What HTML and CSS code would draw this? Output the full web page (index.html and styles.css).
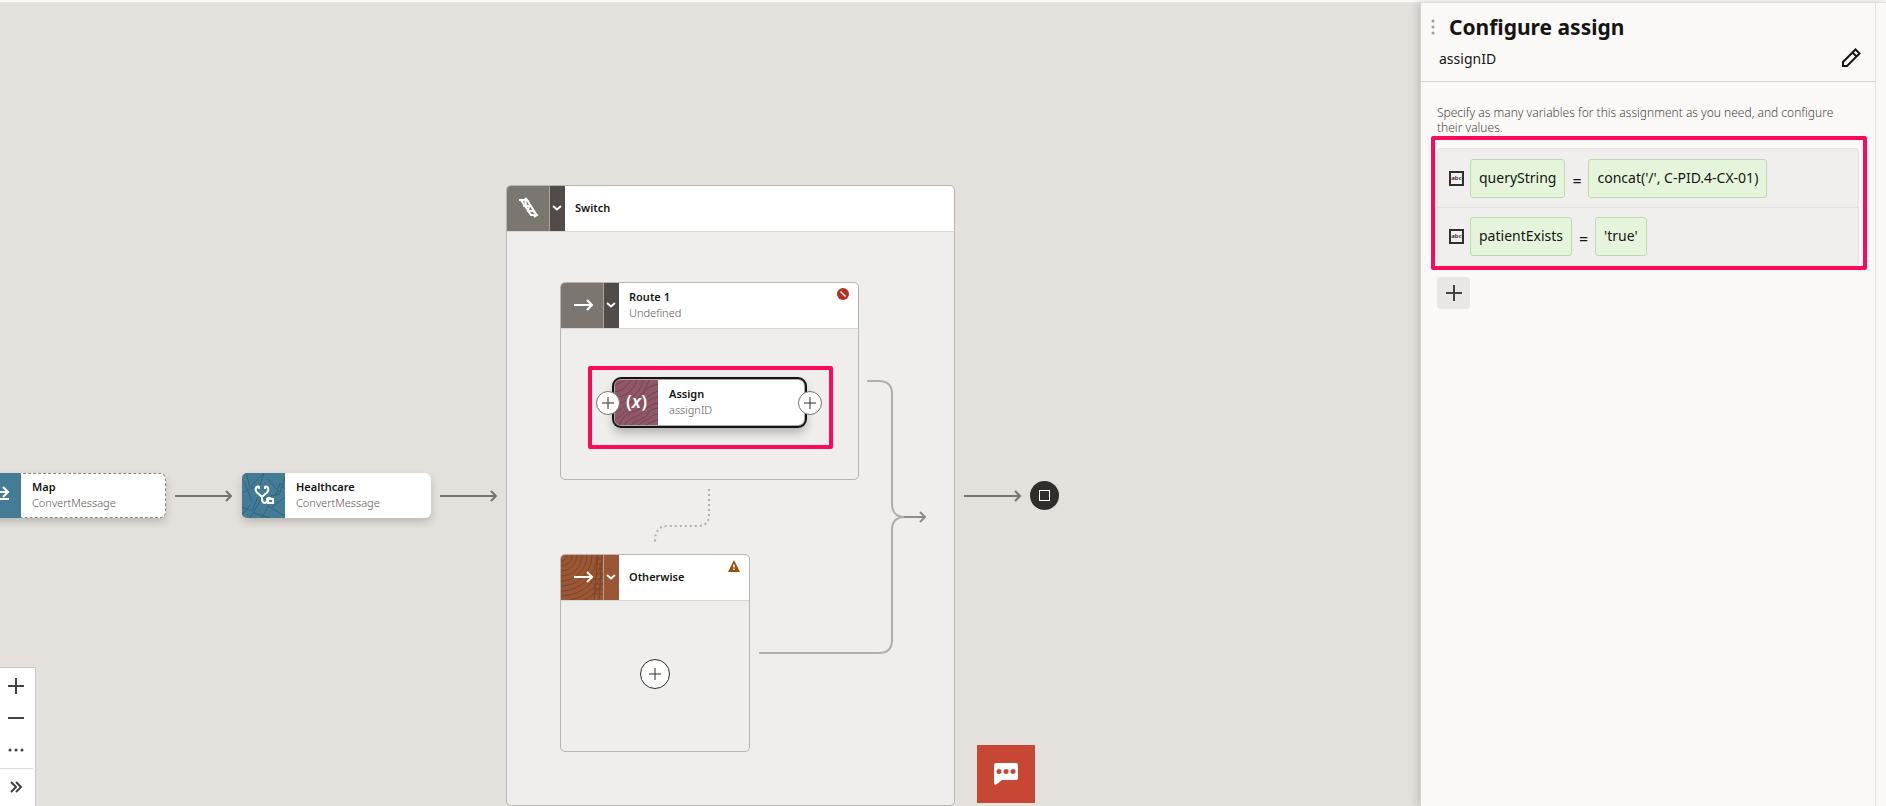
FILE: index.html
```html
<!DOCTYPE html>
<html lang="en">
<head>
<meta charset="utf-8">
<title>Configure assign</title>
<link rel="stylesheet" href="styles.css">
</head>
<body>
<div class="app">
  <main class="canvas">
    <svg class="wires" aria-hidden="true">
      <g class="wire-dark">
        <path d="M175 493h56M226 488l5 5-5 5"/>
        <path d="M440 493h56M491 488l5 5-5 5"/>
        <path d="M964 493h56M1015 488l5 5-5 5"/>
      </g>
    </svg>

    <section class="node map">
      <div class="tile teal"><svg viewBox="0 0 43 45"><path class="ico" d="M12 19h19M25 14l5 5-5 5M13 26h18"/></svg></div>
      <div class="label"><b>Map</b><span>ConvertMessage</span></div>
    </section>

    <section class="node health">
      <div class="tile teal"><svg viewBox="0 0 43 45">
        <path class="grain" d="M4 0l4 14 14-14M0 20l12-6M8 45l12-20 18-4M22 0l-4 12M26 6l12 14 5-16M0 34l10 4 6-14M20 45l6-12 17 10M30 34l13-10M2 8l8 20M34 22l4-12 5 6M12 40l16 5M0 42l8-10"/>
        <path class="ico" d="M17 13.500c-4-.500-4 4-2 6l5 4.500 5-4.500c2-2 2-6.500-2-6M17 13v3M23 13v3M20 24v2c0 5 5 5 5 1 0-3 4-3 4 0"/>
        <rect class="ico" x="26" y="26" width="5" height="4"/></svg></div>
      <div class="label"><b>Healthcare</b><span>ConvertMessage</span></div>
    </section>

    <section class="group switch">
      <header>
        <div class="tile gray"><svg viewBox="0 0 43 45"><path class="ico" d="M12 14h8l-2-2M14 14l10 15h5M20 14l9 14M26 25l4 4-3 2M18 13l1 6-3 1M17 20h5l-1 5h5l2 2"/></svg></div>
        <button class="toggle dark" aria-label="Collapse Switch"><svg viewBox="0 0 14 45"><path class="ico" d="M3 20l4 3.500 4-3.500"/></svg></button>
        <div class="label"><b>Switch</b></div>
      </header>
    </section>

    <section class="group route">
      <header>
        <div class="tile gray"><svg viewBox="0 0 43 45"><path class="ico" d="M13 22h17M26 17l5 5-5 5"/></svg></div>
        <button class="toggle dark" aria-label="Collapse Route 1"><svg viewBox="0 0 14 45"><path class="ico" d="M3 20l4 3.500 4-3.500"/></svg></button>
        <div class="label"><b>Route 1</b><span>Undefined</span></div>
        <svg class="status" viewBox="0 0 12 12"><circle cx="6" cy="6" r="6" fill="#b3311f"/><path d="M3.500 3.500l5 5" stroke="#fff" stroke-width="1.500"/></svg>
      </header>
    </section>

    <section class="group otherwise">
      <header>
        <div class="tile rust"><svg viewBox="0 0 43 45">
          <g class="grain"><circle r="6"/><circle r="11"/><circle r="16"/><circle r="21"/><circle r="26"/><circle r="31"/><circle r="36"/><circle r="41"/><circle r="46"/><circle r="51"/></g>
          <path class="grain" d="M37 0l-4 45M41 0l-3 45M34 4h9M34 9h9M34 14h9M33 19h10M33 24h10M32 29h11M32 34h11M31 39h12"/>
          <path class="ico" d="M13 22h17M26 17l5 5-5 5"/></svg></div>
        <button class="toggle rust" aria-label="Collapse Otherwise"><svg viewBox="0 0 14 45"><path class="ico" d="M3 20l4 3.500 4-3.500"/></svg></button>
        <div class="label"><b>Otherwise</b></div>
        <svg class="status" viewBox="0 0 12 12"><path d="M6 0l6 12H0z" fill="#95520f"/><path d="M6 4.500v3M6 8.500v1.500" stroke="#fff" stroke-width="1.500"/></svg>
      </header>
      <div class="body"><button class="add large" aria-label="Add action"><svg viewBox="0 0 12 12"><path d="M6 0v12M0 6h12"/></svg></button></div>
    </section>

    <svg class="wires" aria-hidden="true">
      <path class="wire-light" d="M867 378h12q13 0 13 13v110q0 13 13 13M759 650h120q13 0 13-13V527q0-13 13-13"/>
      <path class="wire-mid" d="M904 514h21M920 509l5 5-5 5"/>
      <path class="wire-dots" d="M709 486v26q0 11-11 11h-31q-12 0-12 16"/>
    </svg>

    <div class="callout assign-mark"></div>
    <section class="node assign">
      <div class="tile plum"><svg viewBox="0 0 43 45">
        <path class="grain" d="M0 6c5-4 8-4 10-6M0 12C10 10 12 5 16 0M0 18c10-2 18-6 22-18M0 25c8-2 12-6 16-8 6-3 10-8 12-17M0 32c10-3 8-8 16-10 8-3 14-10 18-22M0 39c8-3 10-10 18-12 8-3 14-12 25-16M4 45c4-8 8-12 16-14s10-12 23-14M10 45c2-6 10-8 14-10 6-3 8-10 19-12M16 45c6-6 14-6 16-10 2-5 6-6 11-7M24 45c4-5 8-4 12-8 2-2 4-3 7-3M32 45c3-3 7-4 11-5M28 14c2-6 8-8 15-10"/></svg>
        <strong>(<i>x</i>)</strong></div>
      <div class="label"><b>Assign</b><span>assignID</span></div>
      <button class="add before" aria-label="Add before"><svg viewBox="0 0 12 12"><path d="M6 0v12M0 6h12"/></svg></button>
      <button class="add after" aria-label="Add after"><svg viewBox="0 0 12 12"><path d="M6 0v12M0 6h12"/></svg></button>
    </section>

    <div class="end"></div>

    <nav class="zoombar">
      <button aria-label="Zoom in"><svg viewBox="0 0 16 16"><path d="M8 0v16M0 8h16"/></svg></button>
      <button aria-label="Zoom out"><svg viewBox="0 0 16 16"><path d="M0 8h16"/></svg></button>
      <button aria-label="More"><svg viewBox="0 0 16 16"><path class="dots" d="M2 8h.01M8 8h.01M14 8h.01"/></svg></button>
      <hr>
      <button aria-label="Expand"><svg viewBox="0 0 16 16"><path d="M3 3l5 5-5 5M8 3l5 5-5 5"/></svg></button>
    </nav>

    <button class="chat" aria-label="Chat"><svg viewBox="0 0 24 22"><path d="M2 0h20q2 0 2 2v13q0 2-2 2H8l-5 4q-3 2-3-1V2q0-2 2-2z" fill="#fff"/><g fill="#c74634"><circle cx="5" cy="8.500" r="2.500"/><circle cx="12" cy="8.500" r="2.500"/><circle cx="19" cy="8.500" r="2.500"/></g></svg></button>
  </main>

  <aside class="panel">
    <header class="panel-head">
      <div class="title"><svg viewBox="0 0 4 16"><g fill="#a19d99"><circle cx="2" cy="2" r="1.500"/><circle cx="2" cy="8" r="1.500"/><circle cx="2" cy="14" r="1.500"/></g></svg><h1>Configure assign</h1></div>
      <div class="name"><span>assignID</span>
        <button aria-label="Edit"><svg viewBox="0 0 20 20"><path d="M2 18v-4L14.500 1.500l4 4L6 18zM11.500 4.500l4 4"/></svg></button></div>
    </header>
    <div class="panel-body">
      <p>Specify as many variables for this assignment as you need, and configure their values.</p>
      <div class="callout list-mark">
        <ul>
          <li><em>abc</em><span class="chip">queryString</span><span class="eq">=</span><span class="chip">concat('/', C-PID.4-CX-01)</span></li>
          <li><em>abc</em><span class="chip">patientExists</span><span class="eq">=</span><span class="chip">'true'</span></li>
        </ul>
      </div>
      <button class="plus" aria-label="Add variable"><svg viewBox="0 0 16 16"><path d="M8 0v16M0 8h16"/></svg></button>
    </div>
  </aside>
</div>
</body>
</html>
```
FILE: styles.css
```css
* { box-sizing: border-box; }
body {
  margin: 0;
  background: #fbf9f8;
  color: #161513;
  font-family: "Noto Sans", "Open Sans", sans-serif;
  font-size: 12px;
  overflow: hidden;
}
button { padding: 0; border: 0; background: none; color: inherit; font: inherit; }
svg { display: block; fill: none; }
.app { display: flex; height: 100vh; padding-top: 2px; }

/* Canvas */
.canvas { position: relative; flex: 1; overflow: hidden; background: #e4e1dc; border-top: 1px solid #e8e5e1; }
.wires { position: absolute; inset: 0; width: 100%; height: 100%; }
.wire-dark { stroke: #78736e; stroke-width: 2; }
.wire-light { stroke: #b1aeab; stroke-width: 2; }
.wire-mid { stroke: #8f8b87; stroke-width: 2; }
.wire-dots { stroke: #b1aeab; stroke-width: 2; stroke-dasharray: 2 3; }

.node { position: absolute; display: flex; width: 189px; height: 45px; border-radius: 6px; background: #fff; box-shadow: 0 4px 8px rgba(0, 0, 0, .18); }
.map { left: -23px; top: 470px; border: 1px dashed #8b8580; }
.health { left: 242px; top: 470px; }
.assign { left: 615px; top: 377px; box-shadow: 0 0 0 1px #aaa, 0 0 0 3px #161513, 0 6px 10px 2px rgba(0, 0, 0, .25); }

.tile { position: relative; flex: none; width: 43px; height: 45px; overflow: hidden; border-radius: 5px 0 0 5px; }
.tile svg { width: 43px; height: 45px; }
.map .tile { margin-top: -1px; }
.teal { background: #437c94; --grain: #2f657c; }
.gray { background: #7b766f; }
.dark { background: #514c47; }
.rust { background: #9b5733; --grain: #7d4426; }
.plum { background: #8f5767; --grain: #774253; }
.grain { stroke: var(--grain); stroke-width: 1; }
.ico { stroke: #fff; stroke-width: 2; }
.tile strong { position: absolute; inset: 0; color: #fff; font-size: 18px; font-weight: 600; line-height: 42px; text-align: center; }

.label { display: flex; flex-direction: column; justify-content: center; padding: 0 0 2px 11px; font-size: 11px; line-height: 16px; }
.label b { font-weight: 600; }
.label span { color: #5b5652; font-weight: 300; }

.group { position: absolute; border: 1px solid #b9b5b1; border-radius: 5px; background: #f0eeec; }
.group header { position: relative; display: flex; height: 46px; border-bottom: 1px solid #d8d6d4; border-radius: 5px 5px 0 0; background: #fff; }
.group .tile { width: 42px; border-radius: 4px 0 0 0; }
.group .label { padding-left: 10px; }
.toggle { width: 16px; height: 45px; border-left: 1px solid #aba59e; }
.toggle svg { width: 14px; height: 45px; }
.switch { left: 506px; top: 182px; width: 449px; height: 621px; }
.route { left: 560px; top: 279px; width: 299px; height: 198px; }
.otherwise { left: 560px; top: 551px; width: 190px; height: 198px; }
.otherwise .body { display: flex; align-items: center; justify-content: center; height: 146px; }
.status { position: absolute; top: 5px; right: 9px; width: 12px; height: 12px; }

.add { position: absolute; display: grid; place-items: center; width: 24px; height: 24px; border: 1px solid #76716c; border-radius: 50%; background: #fff; }
.add svg { width: 12px; height: 12px; stroke: #312d2a; }
.add.large { position: static; width: 30px; height: 30px; border-color: #312d2a; }
.before { left: -19px; top: 11px; }
.after { right: -18px; top: 11px; }

.callout { border: 4px solid #fc0a57; border-radius: 2px; }
.assign-mark { position: absolute; left: 588px; top: 363px; width: 245px; height: 83px; }

.end { position: absolute; left: 1030px; top: 478px; display: grid; place-items: center; width: 29px; height: 29px; border-radius: 50%; background: #312d2a; }
.end::after { content: ""; box-sizing: border-box; width: 11px; height: 11px; border: 1px solid #fff; }

.zoombar { position: absolute; left: 0; bottom: 0; display: flex; flex-direction: column; width: 36px; height: 139px; padding-top: 2px; border: solid #cbc8c4; border-width: 1px 1px 0 0; background: #fff; }
.zoombar button { display: grid; place-items: center; width: 32px; height: 32px; }
.zoombar svg, .plus svg { width: 16px; height: 16px; stroke: #45413d; stroke-width: 2; }
.zoombar .dots { stroke-width: 3; stroke-linecap: round; }
.zoombar hr { width: 33px; height: 1px; margin: 2px 0; border: 0; background: #e0dedc; }

.chat { position: absolute; left: 977px; bottom: 3px; display: grid; place-items: center; width: 58px; height: 58px; background: #c74634; }
.chat svg { width: 24px; height: 22px; }

/* Configuration panel */
.panel { position: relative; flex: none; width: 466px; padding-right: 10px; border-top: 1px solid #e4e2e0; border-left: 1px solid #d5d2cf; background: #fbf9f8; box-shadow: -2px 0 8px rgba(0, 0, 0, .16); }
.panel-head { height: 79px; padding: 7px 12px 0 10px; border-right: 1px solid #e4e2e0; border-bottom: 1px solid #d8d6d4; }
.title { display: flex; align-items: center; gap: 14px; height: 34px; }
.title svg { width: 4px; height: 16px; }
h1 { margin: 0; font-size: 21px; font-weight: 700; line-height: 34px; }
.name { display: flex; align-items: center; justify-content: space-between; height: 28px; padding-left: 8px; font-size: 14px; }
.name svg { width: 20px; height: 20px; stroke: #161513; stroke-width: 2; }
.name button { margin-right: 2px; }
.panel-body { height: calc(100% - 79px); padding: 23px 8px 0 10px; border-right: 1px solid #e4e2e0; }
.panel-body p { margin: 0 0 1px; padding: 0 16px 0 6px; color: #4b4642; font-size: 12px; font-weight: 300; line-height: 15px; }
.list-mark { padding: 8px 4px 0 2px; }
ul { margin: 0; padding: 0; border: 1px solid #e4e2e0; border-radius: 4px; background: #f1efed; list-style: none; }
li { display: flex; align-items: center; height: 58px; padding-left: 11px; }
li + li { border-top: 1px solid #e4e2e0; }
em { width: 15px; height: 15px; margin-right: 6px; border: 2px solid #312d2a; font-size: 6px; font-style: normal; font-weight: 600; line-height: 10px; text-align: center; display: flex; justify-content: center; }
.chip { height: 39px; padding: 0 8px; border: 1px solid #b9dcab; border-radius: 3px; background: #e4f5dc; font-size: 14px; line-height: 36px; }
.eq { width: 23px; padding-top: 5px; font-size: 16px; text-align: center; }
.plus { display: grid; place-items: center; width: 33px; height: 32px; margin: 7px 0 0 6px; border-radius: 4px; background: #e9e7e5; }
```
